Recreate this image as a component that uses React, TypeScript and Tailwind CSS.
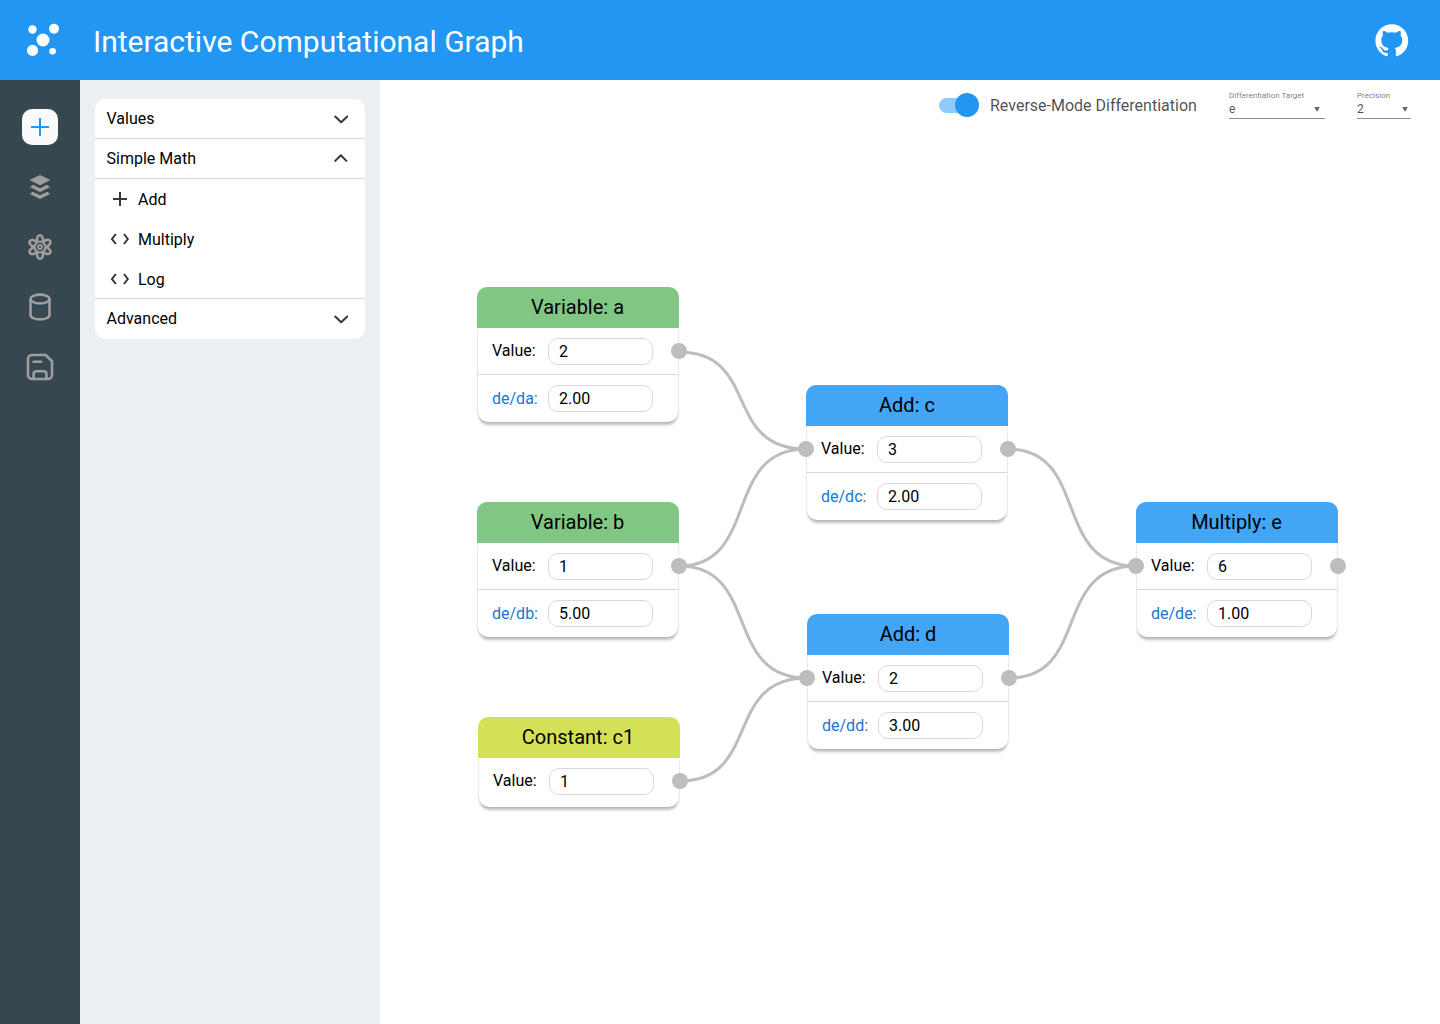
import React from "react";
import { BiLogoGithub } from "react-icons/bi";

type GraphNode = {
  title: string;
  x: number;
  y: number;
  header: string;
  value: string;
  derivative?: { label: string; value: string };
  input?: boolean;
};

const nodes: GraphNode[] = [
  { title: "Variable: a", x: 477, y: 287, header: "bg-[#81c784] pr-px", value: "2", derivative: { label: "de/da:", value: "2.00" } },
  { title: "Variable: b", x: 477, y: 502, header: "bg-[#81c784] pr-px", value: "1", derivative: { label: "de/db:", value: "5.00" } },
  { title: "Constant: c1", x: 478, y: 717, header: "bg-[#d4e157] pr-[2px]", value: "1" },
  { title: "Add: c", x: 806, y: 385, header: "bg-[#42a5f5]", value: "3", derivative: { label: "de/dc:", value: "2.00" }, input: true },
  { title: "Add: d", x: 807, y: 614, header: "bg-[#42a5f5]", value: "2", derivative: { label: "de/dd:", value: "3.00" }, input: true },
  { title: "Multiply: e", x: 1136, y: 502, header: "bg-[#42a5f5] pr-px", value: "6", derivative: { label: "de/de:", value: "1.00" }, input: true },
];

const edges = [
  [679, 352, 806, 449],
  [679, 566, 806, 449],
  [679, 566, 807, 678],
  [680, 781, 807, 678],
  [1008, 449, 1136, 566],
  [1009, 678, 1136, 566],
];

const CANVAS_X = 380;
const CANVAS_Y = 80;

function Field({ label, value, blue }: { label: string; value: string; blue?: boolean }) {
  return (
    <div className="flex h-[27px] items-center">
      <span className={blue ? "w-[56px] text-[#1976d2]" : "w-[56px] pb-[2px] text-black"}>{label}</span>
      <span className="flex h-[27px] w-[105px] items-center rounded-[10px] border border-[#d9d9d9] bg-white pl-[10px]">{value}</span>
    </div>
  );
}

function NodeCard({ node }: { node: GraphNode }) {
  return (
    <div className="absolute w-[202px]" style={{ left: node.x - CANVAS_X, top: node.y - CANVAS_Y }}>
      <div className={`relative z-10 flex h-[41px] items-center justify-center rounded-t-[10px] pb-[2px] text-xl leading-none text-black ${node.header}`}>
        {node.title}
      </div>
      <div className="mx-px rounded-b-[10px] bg-white text-base leading-none text-black shadow-[0_4px_3px_-1px_rgba(0,0,0,0.25),0_0_2px_rgba(0,0,0,0.2)]">
        <div className={node.derivative ? "h-[47px] border-b border-[#d9d9d9] pl-[14px] pt-[10px]" : "h-[49px] pl-[14px] pt-[10px]"}>
          <Field label="Value:" value={node.value} />
        </div>
        {node.derivative && (
          <div className="h-[47px] pl-[14px] pt-[10px]">
            <Field label={node.derivative.label} value={node.derivative.value} blue />
          </div>
        )}
      </div>
      {node.input && <span className="absolute -left-2 top-[56px] z-20 size-4 rounded-full bg-[#bdbdbd]" />}
      <span className="absolute -right-2 top-[56px] z-20 size-4 rounded-full bg-[#bdbdbd]" />
    </div>
  );
}

function Logo() {
  return (
    <svg width="36" height="36" viewBox="25 22 36 36" fill="#fff" className="ml-[25px]">
      <circle cx="32.5" cy="29.5" r="4.2" />
      <circle cx="54" cy="28.8" r="5" />
      <circle cx="43" cy="40" r="6.5" />
      <circle cx="32.5" cy="50.4" r="5.6" />
      <circle cx="52.6" cy="51.2" r="3.3" />
    </svg>
  );
}

function LayersIcon() {
  return (
    <svg width="20" height="24" viewBox="0 0 20 24" fill="#9e9e9e" stroke="#9e9e9e" strokeWidth="1" strokeLinejoin="round">
      <path d="M10 .5 19.5 5.1 10 9.8.5 5.1Z" />
      <path d="M.5 11.8 3 10.5 10 13.8 17 10.5 19.5 11.8 10 16.6Z" />
      <path d="M.5 18.7 3 17.4 10 20.7 17 17.4 19.5 18.7 10 23.5Z" />
    </svg>
  );
}

const petalAngles = [0, 60, 120, 180, 240, 300];

function AtomIcon() {
  return (
    <svg width="28" height="28" viewBox="-14 -14 28 28" fill="none" stroke="#9e9e9e" strokeWidth="2.6">
      {petalAngles.map((angle) => (
        <path key={angle} d="M-3.2-5.2C-3.2-9.4-1.8-11.8 0-11.8S3.2-9.4 3.2-5.2" transform={`rotate(${angle})`} />
      ))}
      <circle r="5.5" strokeWidth="2.2" />
      <circle r="2" strokeWidth="1.9" />
    </svg>
  );
}

function CylinderIcon() {
  return (
    <svg width="28" height="28" viewBox="0 0 28 28" fill="none" stroke="#9e9e9e" strokeWidth="2.6">
      <ellipse cx="14" cy="6" rx="9.5" ry="4.4" />
      <path d="M4.5 6v16c0 2.4 4.2 4.4 9.5 4.4s9.5-2 9.5-4.4V6" />
    </svg>
  );
}

function SaveIcon() {
  return (
    <svg width="28" height="28" viewBox="0 0 28 28" fill="none" stroke="#9e9e9e" strokeWidth="2.6" strokeLinecap="round" strokeLinejoin="round">
      <path d="M6 2h13.7l6.3 6.2V22a4 4 0 0 1-4 4H6A4 4 0 0 1 2 22V6A4 4 0 0 1 6 2Z" />
      <path d="M7.6 26v-5.2a2.5 2.5 0 0 1 2.5-2.5h7.8a2.5 2.5 0 0 1 2.5 2.5V26M7.6 8.7h7.6" />
    </svg>
  );
}

function Chevron({ up }: { up?: boolean }) {
  return (
    <svg width="16" height="10" viewBox="0 0 16 10" fill="none" stroke="#37363f" strokeWidth="2" strokeLinecap="round" strokeLinejoin="round">
      <path d={up ? "M2.2 6.9 7.8 1.2 13.4 6.9" : "M2.2 2.5 8.2 8.2 14.2 2.5"} />
    </svg>
  );
}

function CodeIcon() {
  return (
    <svg width="20" height="14" viewBox="0 0 20 14" fill="none" stroke="#37363f" strokeWidth="2">
      <path d="M5.8 2 2 7l3.8 5M14 2l3.8 5-3.8 5" />
    </svg>
  );
}

function PlusIcon() {
  return (
    <svg width="20" height="14" viewBox="0 0 20 14" stroke="#37363f" strokeWidth="2">
      <path d="M3 7h14M10 0v14" />
    </svg>
  );
}

function Select({ label, value, className }: { label: string; value: string; className: string }) {
  return (
    <div className={`flex h-[28px] flex-col border-b border-[#8c8c8c] ${className}`}>
      <span className="whitespace-nowrap text-[8px] leading-[10px] text-black/55">{label}</span>
      <div className="flex h-[15px] items-center justify-between text-xs leading-none text-black/70">
        {value}
        <svg width="6" height="4" viewBox="0 0 6 4" fill="#666">
          <path d="M.3 0h5.4L3.7 4H2.3Z" />
        </svg>
      </div>
    </div>
  );
}

export default function App() {
  return (
    <div className="flex h-[1024px] w-[1440px] flex-col overflow-hidden bg-white font-['Roboto',sans-serif]">
      <header className="flex h-20 shrink-0 items-center bg-[#2196f3]">
        <Logo />
        <h1 className="ml-8 mt-[3px] text-[30px] leading-none text-white">Interactive Computational Graph</h1>
        <BiLogoGithub className="ml-auto mr-[28.5px] mt-px size-[39.5px] text-white" />
      </header>
      <div className="flex flex-1">
        <nav className="flex w-20 flex-col items-center gap-6 bg-[#37474f] pt-[29px]">
          <button className="flex size-9 items-center justify-center rounded-[10px] bg-[#fafafa]">
            <svg width="18" height="18" viewBox="0 0 18 18" stroke="#2196f3" strokeWidth="2">
              <path d="M0 9h18M9 0v18" />
            </svg>
          </button>
          <button className="flex size-9 items-center justify-center"><LayersIcon /></button>
          <button className="flex size-9 items-center justify-center"><AtomIcon /></button>
          <button className="flex size-9 items-center justify-center"><CylinderIcon /></button>
          <button className="flex size-9 items-center justify-center"><SaveIcon /></button>
        </nav>
        <aside className="w-[300px] bg-[#eceff1] px-[15px] pt-[19px]">
          <div className="h-[240px] overflow-hidden rounded-[10px] bg-white text-base leading-none text-black">
            <div className="flex h-10 items-center justify-between border-b border-[#d9d9d9] pl-[11.5px] pr-4">Values<Chevron /></div>
            <div className="flex h-10 items-center justify-between border-b border-[#d9d9d9] pl-[11.5px] pr-4">Simple Math<Chevron up /></div>
            <div className="flex h-10 items-center gap-2 pl-[15px]"><PlusIcon /><span className="pt-[2px]">Add</span></div>
            <div className="flex h-10 items-center gap-2 pl-[15px]"><CodeIcon /><span className="pt-[2px]">Multiply</span></div>
            <div className="flex h-10 items-center gap-2 border-b border-[#d9d9d9] pl-[15px]"><CodeIcon /><span className="pt-[2px]">Log</span></div>
            <div className="flex h-10 items-center justify-between pl-[11.5px] pr-4">Advanced<Chevron /></div>
          </div>
        </aside>
        <main className="relative flex-1 bg-white">
          <div className="flex items-start justify-end pr-[29px] pt-[11px]">
            <div className="mt-[2px] flex h-6 items-center">
              <span className="relative flex h-6 w-10 items-center">
                <span className="h-[15px] w-[34px] rounded-full bg-[#90caf9]" />
                <span className="absolute right-0 top-0 size-6 rounded-full bg-[#2196f3]" />
              </span>
              <span className="ml-[11px] w-[207px] whitespace-nowrap pt-[2px] text-base leading-none text-black/70">Reverse-Mode Differentiation</span>
            </div>
            <Select label="Differentiation Target" value="e" className="ml-8 w-24 pr-[5px]" />
            <Select label="Precision" value="2" className="ml-8 w-[54px] pr-[3px]" />
          </div>
          <svg className="absolute left-0 top-0" width="1060" height="944" viewBox="380 80 1060 944" fill="none" stroke="#bdbdbd" strokeWidth="3">
            {edges.map(([x1, y1, x2, y2], i) => {
              const w = x2 - x1;
              return <path key={i} d={`M${x1} ${y1}C${x1 + w * 0.64} ${y1} ${x2 - w * 0.66} ${y2} ${x2} ${y2}`} />;
            })}
          </svg>
          {nodes.map((node) => (
            <NodeCard key={node.title} node={node} />
          ))}
        </main>
      </div>
    </div>
  );
}
